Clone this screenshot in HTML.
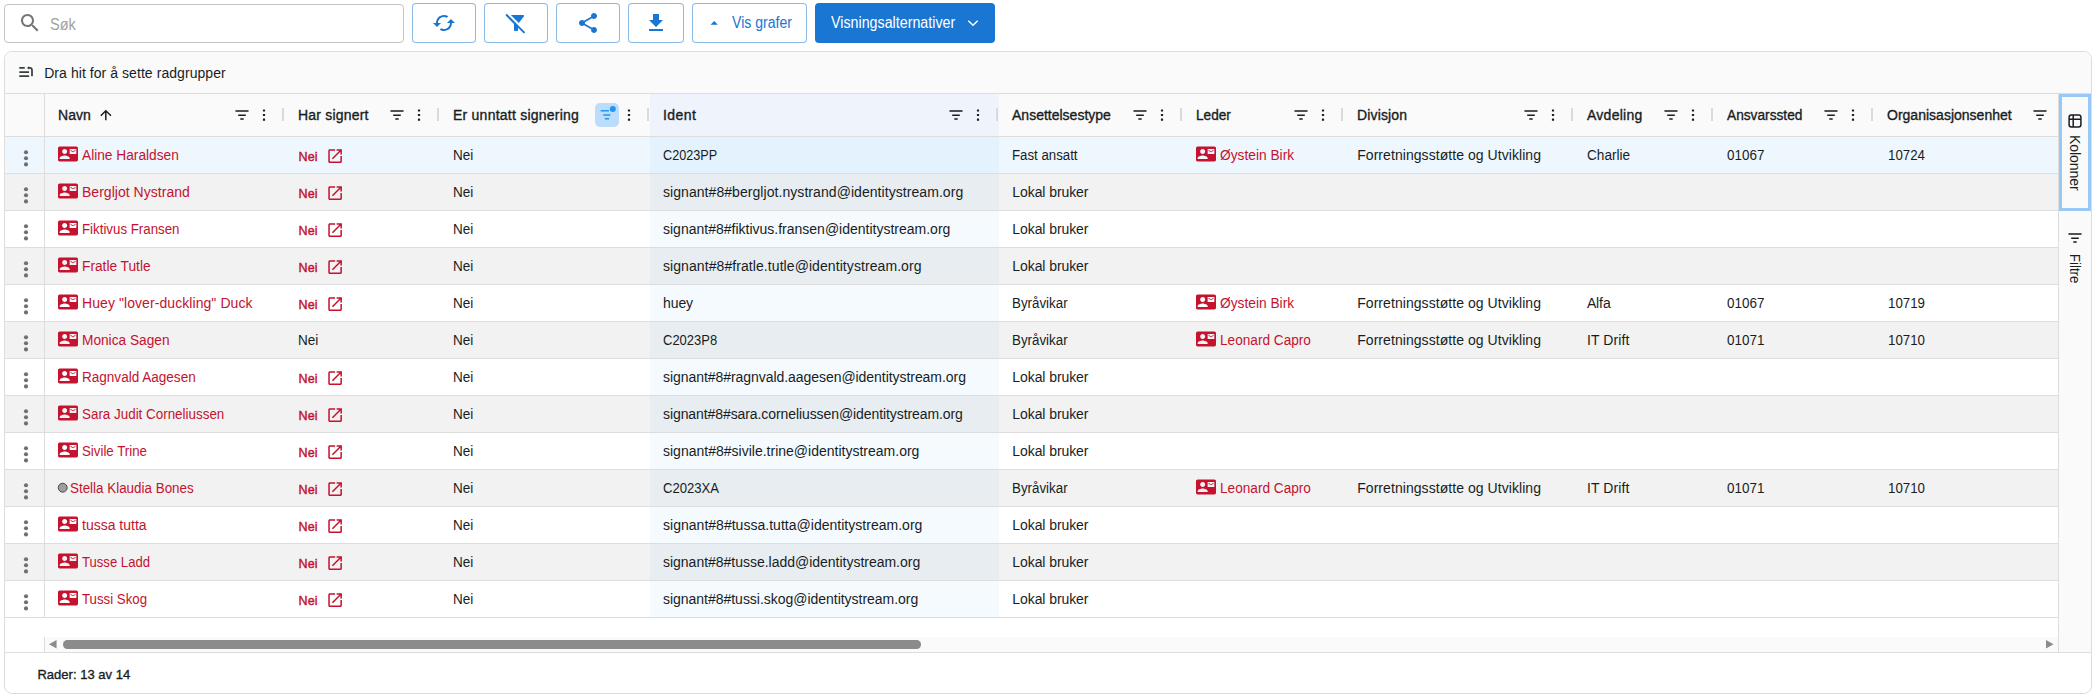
<!DOCTYPE html>
<html lang="nb"><head><meta charset="utf-8"><title>Signering</title><style>
html,body{margin:0;padding:0}
body{width:2098px;height:697px;overflow:hidden;background:#fff;position:relative;font-family:"Liberation Sans",sans-serif;color:#181d1f}
.a{position:absolute;box-sizing:border-box}
.ic{position:absolute;display:block;overflow:visible}
.t{position:absolute;white-space:nowrap;display:block;transform-origin:0 50%}
.vt{writing-mode:vertical-lr;transform:translateX(-50%);line-height:16px}
.search{left:4px;top:4px;width:400px;height:39px;border:1px solid #c4c4c4;border-radius:4px;background:#fff}
.obtn{top:3px;height:40px;border:1px solid rgba(25,118,210,.5);border-radius:4px;background:#fff}
.cbtn{top:3px;height:40px;border-radius:4px;background:#1976d2}
.grid{position:absolute;left:4px;top:51px;width:2088px;height:643px;box-sizing:border-box;border:1px solid #dddddd;border-radius:8px;overflow:hidden;background:#fff}
.gi{position:absolute;left:-5px;top:-52px;width:2098px;height:697px}
</style></head><body>
<div class="a search"></div>
<svg class="ic" style="left:17.8px;top:11px;width:24px;height:24px" viewBox="0 0 24 24"><path fill="#757575" d="M15.500 14h-.790l-.280-.270C15.410 12.590 16 11.110 16 9.500 16 5.910 13.090 3 9.500 3S3 5.910 3 9.500 5.910 16 9.500 16c1.610 0 3.090-.590 4.230-1.570l.270.280v.790l5 4.990L20.490 19l-4.990-5zm-6 0C7.010 14 5 11.990 5 9.500S7.010 5 9.500 5 14 7.010 14 9.500 11.990 14 9.500 14z"/></svg>
<span class="t " style="left:49.9px;top:4.5px;height:39px;line-height:39px;font-size:16px;color:#a2a2a2;transform:scaleX(0.9103);">Søk</span>
<div class="a obtn" style="left:412px;width:64px"></div>
<div class="a obtn" style="left:484px;width:64px"></div>
<div class="a obtn" style="left:556px;width:64px"></div>
<div class="a obtn" style="left:628px;width:56px"></div>
<div class="a obtn" style="left:692px;width:115px"></div>
<svg class="ic" style="left:432px;top:11px;width:24px;height:24px" viewBox="0 0 24 24"><path fill="#1976d2" d="M19 8l-4 4h3c0 3.310-2.690 6-6 6-1.010 0-1.970-.250-2.800-.700l-1.460 1.460C8.970 19.540 10.430 20 12 20c4.420 0 8-3.580 8-8h3l-4-4zM6 12c0-3.310 2.690-6 6-6 1.010 0 1.970.250 2.800.700l1.460-1.460C15.030 4.460 13.570 4 12 4c-4.420 0-8 3.580-8 8H1l4 4 4-4H6z"/></svg>
<svg class="ic" style="left:504px;top:11px;width:24px;height:24px" viewBox="0 0 24 24"><path fill="#1976d2" d="M19.790 5.610C20.300 4.950 19.830 4 19 4H6.830l7.970 7.970 4.990-6.360zM2.810 2.810 1.390 4.220 10 13v6c0 .550.450 1 1 1h2c.550 0 1-.450 1-1v-2.170l5.780 5.780 1.410-1.410L2.810 2.810z"/></svg>
<svg class="ic" style="left:576px;top:11px;width:24px;height:24px" viewBox="0 0 24 24"><path fill="#1976d2" d="M18 16.080c-.760 0-1.440.300-1.960.770L8.910 12.700c.050-.230.090-.460.090-.700s-.040-.470-.090-.700l7.050-4.110c.540.500 1.250.810 2.040.810 1.660 0 3-1.340 3-3s-1.340-3-3-3-3 1.340-3 3c0 .240.040.470.090.700L8.040 9.810C7.500 9.310 6.790 9 6 9c-1.660 0-3 1.340-3 3s1.340 3 3 3c.790 0 1.500-.310 2.040-.810l7.120 4.160c-.050.210-.080.430-.080.650 0 1.610 1.310 2.920 2.920 2.920 1.610 0 2.920-1.310 2.920-2.920s-1.310-2.920-2.920-2.920z"/></svg>
<svg class="ic" style="left:644px;top:11px;width:24px;height:24px" viewBox="0 0 24 24"><path fill="#1976d2" d="M19 9h-4V3H9v6H5l7 7 7-7zM5 18v2h14v-2H5z"/></svg>
<svg class="ic" style="left:709.9px;top:21.2px;width:8.4px;height:3.7px" viewBox="0 0 10 5"><path fill="#1976d2" d="M0 5l5-5 5 5z"/></svg>
<span class="t " style="left:732.0px;top:3px;height:40px;line-height:40px;font-size:15.6px;color:#1976d2;transform:scaleX(0.9029);">Vis grafer</span>
<div class="a cbtn" style="left:815px;width:180px"></div>
<span class="t " style="left:831.2px;top:3px;height:40px;line-height:40px;font-size:15.6px;color:#fff;transform:scaleX(0.9145);">Visningsalternativer</span>
<svg class="ic" style="left:966.8px;top:19.4px;width:12px;height:8px" viewBox="0 0 12 8"><path fill="none" stroke="#fff" stroke-width="1.500" d="M1.300 1.700l4.700 4.500 4.700-4.500"/></svg>
<div class="grid"><div class="gi">
<div class="a " style="left:5px;top:52px;width:2086px;height:41px;background:#fafafa"></div>
<div class="a " style="left:5px;top:93px;width:2086px;height:1px;background:#dddddd"></div>
<svg class="ic" style="left:18px;top:64px;width:16px;height:16px" viewBox="0 0 16 16"><g fill="none" stroke="#3a3f41" stroke-width="1.75"><path d="M1.300 3.900h5.500M1.300 8h9.800M1.300 12h9.800"/><path d="M14 12.300V6.200q0-2.300-2.300-2.300h-1.500"/></g><path fill="#3a3f41" d="M11.100 2.300v3.200L8.900 3.900z"/></svg>
<span class="t " style="left:44.2px;top:53.4px;height:41px;line-height:41px;font-size:14px;color:#181d1f;letter-spacing:0.060px;">Dra hit for å sette radgrupper</span>
<div class="a " style="left:5px;top:94px;width:2054px;height:42px;background:#fafafa"></div>
<div class="a " style="left:5px;top:136px;width:2054px;height:1px;background:#dddddd"></div>
<div class="a " style="left:5px;top:137px;width:2054px;height:36px;background:#fff"></div>
<div class="a " style="left:5px;top:137px;width:2054px;height:36px;background:rgba(33,150,243,.08)"></div>
<div class="a " style="left:5px;top:173px;width:2054px;height:1px;background:#dddddd"></div>
<div class="a " style="left:5px;top:174px;width:2054px;height:36px;background:#f2f2f2"></div>
<div class="a " style="left:5px;top:210px;width:2054px;height:1px;background:#dddddd"></div>
<div class="a " style="left:5px;top:211px;width:2054px;height:36px;background:#fff"></div>
<div class="a " style="left:5px;top:247px;width:2054px;height:1px;background:#dddddd"></div>
<div class="a " style="left:5px;top:248px;width:2054px;height:36px;background:#f2f2f2"></div>
<div class="a " style="left:5px;top:284px;width:2054px;height:1px;background:#dddddd"></div>
<div class="a " style="left:5px;top:285px;width:2054px;height:36px;background:#fff"></div>
<div class="a " style="left:5px;top:321px;width:2054px;height:1px;background:#dddddd"></div>
<div class="a " style="left:5px;top:322px;width:2054px;height:36px;background:#f2f2f2"></div>
<div class="a " style="left:5px;top:358px;width:2054px;height:1px;background:#dddddd"></div>
<div class="a " style="left:5px;top:359px;width:2054px;height:36px;background:#fff"></div>
<div class="a " style="left:5px;top:395px;width:2054px;height:1px;background:#dddddd"></div>
<div class="a " style="left:5px;top:396px;width:2054px;height:36px;background:#f2f2f2"></div>
<div class="a " style="left:5px;top:432px;width:2054px;height:1px;background:#dddddd"></div>
<div class="a " style="left:5px;top:433px;width:2054px;height:36px;background:#fff"></div>
<div class="a " style="left:5px;top:469px;width:2054px;height:1px;background:#dddddd"></div>
<div class="a " style="left:5px;top:470px;width:2054px;height:36px;background:#f2f2f2"></div>
<div class="a " style="left:5px;top:506px;width:2054px;height:1px;background:#dddddd"></div>
<div class="a " style="left:5px;top:507px;width:2054px;height:36px;background:#fff"></div>
<div class="a " style="left:5px;top:543px;width:2054px;height:1px;background:#dddddd"></div>
<div class="a " style="left:5px;top:544px;width:2054px;height:36px;background:#f2f2f2"></div>
<div class="a " style="left:5px;top:580px;width:2054px;height:1px;background:#dddddd"></div>
<div class="a " style="left:5px;top:581px;width:2054px;height:36px;background:#fff"></div>
<div class="a " style="left:5px;top:617px;width:2054px;height:1px;background:#dddddd"></div>
<div class="a " style="left:650px;top:94px;width:349px;height:42px;background:#eff3fb"></div>
<div class="a " style="left:650px;top:137px;width:349px;height:36px;background:rgba(33,150,243,.05)"></div>
<div class="a " style="left:650px;top:174px;width:349px;height:36px;background:rgba(33,150,243,.05)"></div>
<div class="a " style="left:650px;top:211px;width:349px;height:36px;background:rgba(33,150,243,.05)"></div>
<div class="a " style="left:650px;top:248px;width:349px;height:36px;background:rgba(33,150,243,.05)"></div>
<div class="a " style="left:650px;top:285px;width:349px;height:36px;background:rgba(33,150,243,.05)"></div>
<div class="a " style="left:650px;top:322px;width:349px;height:36px;background:rgba(33,150,243,.05)"></div>
<div class="a " style="left:650px;top:359px;width:349px;height:36px;background:rgba(33,150,243,.05)"></div>
<div class="a " style="left:650px;top:396px;width:349px;height:36px;background:rgba(33,150,243,.05)"></div>
<div class="a " style="left:650px;top:433px;width:349px;height:36px;background:rgba(33,150,243,.05)"></div>
<div class="a " style="left:650px;top:470px;width:349px;height:36px;background:rgba(33,150,243,.05)"></div>
<div class="a " style="left:650px;top:507px;width:349px;height:36px;background:rgba(33,150,243,.05)"></div>
<div class="a " style="left:650px;top:544px;width:349px;height:36px;background:rgba(33,150,243,.05)"></div>
<div class="a " style="left:650px;top:581px;width:349px;height:36px;background:rgba(33,150,243,.05)"></div>
<div class="a " style="left:44px;top:94px;width:1px;height:524px;background:#dddddd"></div>
<div class="a " style="left:44px;top:637px;width:1px;height:15px;background:#dddddd"></div>
<span class="t " style="left:58px;top:93.9px;height:43px;line-height:43px;font-size:14px;-webkit-text-stroke:.35px currentColor;color:#181d1f;letter-spacing:0.038px;">Navn</span>
<svg class="ic" style="left:233.85000000000002px;top:107.2px;width:16px;height:16px" viewBox="0 0 16 16"><g fill="none" stroke="#181d1f" stroke-width="1.500"><path d="M1.450 4h13.100M4.200 8.200h7.600M6.300 12.100h3.400"/></g></svg>
<svg class="ic" style="left:255.7px;top:107px;width:16px;height:16px" viewBox="0 0 16 16"><g fill="#181d1f"><rect x="6.900" y="2.400" width="2.200" height="2.200" rx=".5"/><rect x="6.900" y="6.900" width="2.200" height="2.200" rx=".5"/><rect x="6.900" y="11.600" width="2.200" height="2.200" rx=".5"/></g></svg>
<div class="a " style="left:282px;top:108px;width:2px;height:13px;background:#d9dada"></div>
<svg class="ic" style="left:97.9px;top:107px;width:16px;height:16px" viewBox="0 0 16 16"><path fill="none" stroke="#181d1f" stroke-width="1.500" d="M7.800 13.300V3.800M2.800 8.700l5-5 5.200 5"/></svg>
<span class="t " style="left:298px;top:93.9px;height:43px;line-height:43px;font-size:14px;-webkit-text-stroke:.35px currentColor;color:#181d1f;letter-spacing:0.193px;">Har signert</span>
<svg class="ic" style="left:388.85px;top:107.2px;width:16px;height:16px" viewBox="0 0 16 16"><g fill="none" stroke="#181d1f" stroke-width="1.500"><path d="M1.450 4h13.100M4.200 8.200h7.600M6.300 12.100h3.400"/></g></svg>
<svg class="ic" style="left:410.7px;top:107px;width:16px;height:16px" viewBox="0 0 16 16"><g fill="#181d1f"><rect x="6.900" y="2.400" width="2.200" height="2.200" rx=".5"/><rect x="6.900" y="6.900" width="2.200" height="2.200" rx=".5"/><rect x="6.900" y="11.600" width="2.200" height="2.200" rx=".5"/></g></svg>
<div class="a " style="left:437px;top:108px;width:2px;height:13px;background:#d9dada"></div>
<span class="t " style="left:453px;top:93.9px;height:43px;line-height:43px;font-size:14px;-webkit-text-stroke:.35px currentColor;color:#181d1f;letter-spacing:0.237px;">Er unntatt signering</span>
<div class="a " style="left:595.1px;top:103px;width:24px;height:24px;background:#bbdcfb;border-radius:5px"></div>
<svg class="ic" style="left:599.1px;top:107px;width:16px;height:16px" viewBox="0 0 16 16"><g fill="none" stroke="#2196f3" stroke-width="1.500"><path d="M1.700 3.800h8.200M4.300 8h7.100M5.900 11.800h4.100"/></g><circle cx="13.800" cy="1.900" r="3" fill="#2196f3"/></svg>
<svg class="ic" style="left:620.7px;top:107px;width:16px;height:16px" viewBox="0 0 16 16"><g fill="#181d1f"><rect x="6.900" y="2.400" width="2.200" height="2.200" rx=".5"/><rect x="6.900" y="6.900" width="2.200" height="2.200" rx=".5"/><rect x="6.900" y="11.600" width="2.200" height="2.200" rx=".5"/></g></svg>
<div class="a " style="left:647px;top:108px;width:2px;height:13px;background:#d9dada"></div>
<span class="t " style="left:663px;top:93.9px;height:43px;line-height:43px;font-size:14px;-webkit-text-stroke:.35px currentColor;color:#181d1f;letter-spacing:0.415px;">Ident</span>
<svg class="ic" style="left:947.8499999999999px;top:107.2px;width:16px;height:16px" viewBox="0 0 16 16"><g fill="none" stroke="#181d1f" stroke-width="1.500"><path d="M1.450 4h13.100M4.200 8.200h7.600M6.300 12.100h3.400"/></g></svg>
<svg class="ic" style="left:969.7px;top:107px;width:16px;height:16px" viewBox="0 0 16 16"><g fill="#181d1f"><rect x="6.900" y="2.400" width="2.200" height="2.200" rx=".5"/><rect x="6.900" y="6.900" width="2.200" height="2.200" rx=".5"/><rect x="6.900" y="11.600" width="2.200" height="2.200" rx=".5"/></g></svg>
<div class="a " style="left:996px;top:108px;width:2px;height:13px;background:#d9dada"></div>
<span class="t " style="left:1012px;top:93.9px;height:43px;line-height:43px;font-size:14px;-webkit-text-stroke:.35px currentColor;color:#181d1f;letter-spacing:0.004px;">Ansettelsestype</span>
<svg class="ic" style="left:1131.85px;top:107.2px;width:16px;height:16px" viewBox="0 0 16 16"><g fill="none" stroke="#181d1f" stroke-width="1.500"><path d="M1.450 4h13.100M4.200 8.200h7.600M6.300 12.100h3.400"/></g></svg>
<svg class="ic" style="left:1153.7px;top:107px;width:16px;height:16px" viewBox="0 0 16 16"><g fill="#181d1f"><rect x="6.900" y="2.400" width="2.200" height="2.200" rx=".5"/><rect x="6.900" y="6.900" width="2.200" height="2.200" rx=".5"/><rect x="6.900" y="11.600" width="2.200" height="2.200" rx=".5"/></g></svg>
<div class="a " style="left:1180px;top:108px;width:2px;height:13px;background:#d9dada"></div>
<span class="t " style="left:1196px;top:93.9px;height:43px;line-height:43px;font-size:14px;-webkit-text-stroke:.35px currentColor;color:#181d1f;transform:scaleX(0.9717);">Leder</span>
<svg class="ic" style="left:1292.85px;top:107.2px;width:16px;height:16px" viewBox="0 0 16 16"><g fill="none" stroke="#181d1f" stroke-width="1.500"><path d="M1.450 4h13.100M4.200 8.200h7.600M6.300 12.100h3.400"/></g></svg>
<svg class="ic" style="left:1314.7px;top:107px;width:16px;height:16px" viewBox="0 0 16 16"><g fill="#181d1f"><rect x="6.900" y="2.400" width="2.200" height="2.200" rx=".5"/><rect x="6.900" y="6.900" width="2.200" height="2.200" rx=".5"/><rect x="6.900" y="11.600" width="2.200" height="2.200" rx=".5"/></g></svg>
<div class="a " style="left:1341px;top:108px;width:2px;height:13px;background:#d9dada"></div>
<span class="t " style="left:1357px;top:93.9px;height:43px;line-height:43px;font-size:14px;-webkit-text-stroke:.35px currentColor;color:#181d1f;letter-spacing:0.141px;">Divisjon</span>
<svg class="ic" style="left:1522.85px;top:107.2px;width:16px;height:16px" viewBox="0 0 16 16"><g fill="none" stroke="#181d1f" stroke-width="1.500"><path d="M1.450 4h13.100M4.200 8.200h7.600M6.300 12.100h3.400"/></g></svg>
<svg class="ic" style="left:1544.7px;top:107px;width:16px;height:16px" viewBox="0 0 16 16"><g fill="#181d1f"><rect x="6.900" y="2.400" width="2.200" height="2.200" rx=".5"/><rect x="6.900" y="6.900" width="2.200" height="2.200" rx=".5"/><rect x="6.900" y="11.600" width="2.200" height="2.200" rx=".5"/></g></svg>
<div class="a " style="left:1571px;top:108px;width:2px;height:13px;background:#d9dada"></div>
<span class="t " style="left:1587px;top:93.9px;height:43px;line-height:43px;font-size:14px;-webkit-text-stroke:.35px currentColor;color:#181d1f;letter-spacing:0.264px;">Avdeling</span>
<svg class="ic" style="left:1662.85px;top:107.2px;width:16px;height:16px" viewBox="0 0 16 16"><g fill="none" stroke="#181d1f" stroke-width="1.500"><path d="M1.450 4h13.100M4.200 8.200h7.600M6.300 12.100h3.400"/></g></svg>
<svg class="ic" style="left:1684.7px;top:107px;width:16px;height:16px" viewBox="0 0 16 16"><g fill="#181d1f"><rect x="6.900" y="2.400" width="2.200" height="2.200" rx=".5"/><rect x="6.900" y="6.900" width="2.200" height="2.200" rx=".5"/><rect x="6.900" y="11.600" width="2.200" height="2.200" rx=".5"/></g></svg>
<div class="a " style="left:1711px;top:108px;width:2px;height:13px;background:#d9dada"></div>
<span class="t " style="left:1727px;top:93.9px;height:43px;line-height:43px;font-size:14px;-webkit-text-stroke:.35px currentColor;color:#181d1f;transform:scaleX(0.9786);">Ansvarssted</span>
<svg class="ic" style="left:1822.85px;top:107.2px;width:16px;height:16px" viewBox="0 0 16 16"><g fill="none" stroke="#181d1f" stroke-width="1.500"><path d="M1.450 4h13.100M4.200 8.200h7.600M6.300 12.100h3.400"/></g></svg>
<svg class="ic" style="left:1844.7px;top:107px;width:16px;height:16px" viewBox="0 0 16 16"><g fill="#181d1f"><rect x="6.900" y="2.400" width="2.200" height="2.200" rx=".5"/><rect x="6.900" y="6.900" width="2.200" height="2.200" rx=".5"/><rect x="6.900" y="11.600" width="2.200" height="2.200" rx=".5"/></g></svg>
<div class="a " style="left:1871px;top:108px;width:2px;height:13px;background:#d9dada"></div>
<span class="t " style="left:1887px;top:93.9px;height:43px;line-height:43px;font-size:14px;-webkit-text-stroke:.35px currentColor;color:#181d1f;letter-spacing:0.010px;">Organisasjonsenhet</span>
<svg class="ic" style="left:2031.85px;top:107.2px;width:16px;height:16px" viewBox="0 0 16 16"><g fill="none" stroke="#181d1f" stroke-width="1.500"><path d="M1.450 4h13.100M4.200 8.200h7.600M6.300 12.100h3.400"/></g></svg>
<svg class="ic" style="left:17.8px;top:147.7px;width:16px;height:20px" viewBox="0 0 16 20"><g fill="#6f6f6f"><circle cx="8" cy="4.300" r="2.050"/><circle cx="8" cy="10.300" r="2.050"/><circle cx="8" cy="16.400" r="2.050"/></g></svg>
<svg class="ic" style="left:57.9px;top:143.7px;width:20px;height:20px" viewBox="0 0 24 24"><path fill="#c4122f" d="M21 8V7l-3 2-3-2v1l3 2 3-2zm1-5H2C.900 3 0 3.900 0 5v14c0 1.100.900 2 2 2h20c1.100 0 1.990-.900 1.990-2L24 5c0-1.100-.900-2-2-2zM8 6c1.660 0 3 1.340 3 3s-1.340 3-3 3-3-1.340-3-3 1.340-3 3-3zm6 12H2v-1c0-2 4-3.100 6-3.100s6 1.100 6 3.100v1zm8-6h-8V6h8v6z"/></svg>
<span class="t " style="left:82px;top:137.3px;height:36px;line-height:36px;font-size:14px;color:#c4122f;transform:scaleX(0.9793);">Aline Haraldsen</span>
<span class="t " style="left:298.6px;top:138.7px;height:36px;line-height:36px;font-size:12.5px;-webkit-text-stroke:.42px currentColor;color:#c4122f;letter-spacing:0.117px;">Nei</span>
<svg class="ic" style="left:325.8px;top:146.7px;width:18.2px;height:18.2px" viewBox="0 0 24 24"><path fill="#c4122f" d="M19 19H5V5h7V3H5c-1.110 0-2 .900-2 2v14c0 1.100.890 2 2 2h14c1.100 0 2-.900 2-2v-7h-2v7zM14 3v2h3.590l-9.830 9.830 1.410 1.410L19 6.410V10h2V3h-7z"/></svg>
<span class="t " style="left:453.3px;top:137.3px;height:36px;line-height:36px;font-size:14px;color:#181d1f;transform:scaleX(0.9659);">Nei</span>
<span class="t " style="left:663px;top:137.3px;height:36px;line-height:36px;font-size:14px;color:#181d1f;transform:scaleX(0.9043);">C2023PP</span>
<span class="t " style="left:1012.3px;top:137.3px;height:36px;line-height:36px;font-size:14px;color:#181d1f;transform:scaleX(0.9456);">Fast ansatt</span>
<svg class="ic" style="left:1196.2px;top:143.7px;width:20px;height:20px" viewBox="0 0 24 24"><path fill="#c4122f" d="M21 8V7l-3 2-3-2v1l3 2 3-2zm1-5H2C.900 3 0 3.900 0 5v14c0 1.100.900 2 2 2h20c1.100 0 1.990-.900 1.990-2L24 5c0-1.100-.900-2-2-2zM8 6c1.660 0 3 1.340 3 3s-1.340 3-3 3-3-1.340-3-3 1.340-3 3-3zm6 12H2v-1c0-2 4-3.100 6-3.100s6 1.100 6 3.100v1zm8-6h-8V6h8v6z"/></svg>
<span class="t " style="left:1219.7px;top:137.3px;height:36px;line-height:36px;font-size:14px;color:#c4122f;transform:scaleX(0.9819);">Øystein Birk</span>
<span class="t " style="left:1357.2px;top:137.3px;height:36px;line-height:36px;font-size:14px;color:#181d1f;letter-spacing:0.059px;">Forretningsstøtte og Utvikling</span>
<span class="t " style="left:1586.9px;top:137.3px;height:36px;line-height:36px;font-size:14px;color:#181d1f;transform:scaleX(0.9716);">Charlie</span>
<span class="t " style="left:1727px;top:137.3px;height:36px;line-height:36px;font-size:14px;color:#181d1f;transform:scaleX(0.9605);">01067</span>
<span class="t " style="left:1887.5px;top:137.3px;height:36px;line-height:36px;font-size:14px;color:#181d1f;transform:scaleX(0.9502);">10724</span>
<svg class="ic" style="left:17.8px;top:184.7px;width:16px;height:20px" viewBox="0 0 16 20"><g fill="#6f6f6f"><circle cx="8" cy="4.300" r="2.050"/><circle cx="8" cy="10.300" r="2.050"/><circle cx="8" cy="16.400" r="2.050"/></g></svg>
<svg class="ic" style="left:57.9px;top:180.7px;width:20px;height:20px" viewBox="0 0 24 24"><path fill="#c4122f" d="M21 8V7l-3 2-3-2v1l3 2 3-2zm1-5H2C.900 3 0 3.900 0 5v14c0 1.100.900 2 2 2h20c1.100 0 1.990-.900 1.990-2L24 5c0-1.100-.900-2-2-2zM8 6c1.660 0 3 1.340 3 3s-1.340 3-3 3-3-1.340-3-3 1.340-3 3-3zm6 12H2v-1c0-2 4-3.100 6-3.100s6 1.100 6 3.100v1zm8-6h-8V6h8v6z"/></svg>
<span class="t " style="left:82px;top:174.3px;height:36px;line-height:36px;font-size:14px;color:#c4122f;letter-spacing:0.026px;">Bergljot Nystrand</span>
<span class="t " style="left:298.6px;top:175.7px;height:36px;line-height:36px;font-size:12.5px;-webkit-text-stroke:.42px currentColor;color:#c4122f;letter-spacing:0.117px;">Nei</span>
<svg class="ic" style="left:325.8px;top:183.7px;width:18.2px;height:18.2px" viewBox="0 0 24 24"><path fill="#c4122f" d="M19 19H5V5h7V3H5c-1.110 0-2 .900-2 2v14c0 1.100.890 2 2 2h14c1.100 0 2-.900 2-2v-7h-2v7zM14 3v2h3.590l-9.830 9.830 1.410 1.410L19 6.410V10h2V3h-7z"/></svg>
<span class="t " style="left:453.3px;top:174.3px;height:36px;line-height:36px;font-size:14px;color:#181d1f;transform:scaleX(0.9659);">Nei</span>
<span class="t " style="left:663px;top:174.3px;height:36px;line-height:36px;font-size:14px;color:#181d1f;letter-spacing:0.060px;">signant#8#bergljot.nystrand@identitystream.org</span>
<span class="t " style="left:1012.3px;top:174.3px;height:36px;line-height:36px;font-size:14px;color:#181d1f;letter-spacing:-0.077px;">Lokal bruker</span>
<svg class="ic" style="left:17.8px;top:221.7px;width:16px;height:20px" viewBox="0 0 16 20"><g fill="#6f6f6f"><circle cx="8" cy="4.300" r="2.050"/><circle cx="8" cy="10.300" r="2.050"/><circle cx="8" cy="16.400" r="2.050"/></g></svg>
<svg class="ic" style="left:57.9px;top:217.7px;width:20px;height:20px" viewBox="0 0 24 24"><path fill="#c4122f" d="M21 8V7l-3 2-3-2v1l3 2 3-2zm1-5H2C.900 3 0 3.900 0 5v14c0 1.100.900 2 2 2h20c1.100 0 1.990-.900 1.990-2L24 5c0-1.100-.900-2-2-2zM8 6c1.660 0 3 1.340 3 3s-1.340 3-3 3-3-1.340-3-3 1.340-3 3-3zm6 12H2v-1c0-2 4-3.100 6-3.100s6 1.100 6 3.100v1zm8-6h-8V6h8v6z"/></svg>
<span class="t " style="left:82px;top:211.3px;height:36px;line-height:36px;font-size:14px;color:#c4122f;transform:scaleX(0.9493);">Fiktivus Fransen</span>
<span class="t " style="left:298.6px;top:212.7px;height:36px;line-height:36px;font-size:12.5px;-webkit-text-stroke:.42px currentColor;color:#c4122f;letter-spacing:0.117px;">Nei</span>
<svg class="ic" style="left:325.8px;top:220.7px;width:18.2px;height:18.2px" viewBox="0 0 24 24"><path fill="#c4122f" d="M19 19H5V5h7V3H5c-1.110 0-2 .900-2 2v14c0 1.100.890 2 2 2h14c1.100 0 2-.900 2-2v-7h-2v7zM14 3v2h3.590l-9.830 9.830 1.410 1.410L19 6.410V10h2V3h-7z"/></svg>
<span class="t " style="left:453.3px;top:211.3px;height:36px;line-height:36px;font-size:14px;color:#181d1f;transform:scaleX(0.9659);">Nei</span>
<span class="t " style="left:663px;top:211.3px;height:36px;line-height:36px;font-size:14px;color:#181d1f;">signant#8#fiktivus.fransen@identitystream.org</span>
<span class="t " style="left:1012.3px;top:211.3px;height:36px;line-height:36px;font-size:14px;color:#181d1f;letter-spacing:-0.077px;">Lokal bruker</span>
<svg class="ic" style="left:17.8px;top:258.7px;width:16px;height:20px" viewBox="0 0 16 20"><g fill="#6f6f6f"><circle cx="8" cy="4.300" r="2.050"/><circle cx="8" cy="10.300" r="2.050"/><circle cx="8" cy="16.400" r="2.050"/></g></svg>
<svg class="ic" style="left:57.9px;top:254.7px;width:20px;height:20px" viewBox="0 0 24 24"><path fill="#c4122f" d="M21 8V7l-3 2-3-2v1l3 2 3-2zm1-5H2C.900 3 0 3.900 0 5v14c0 1.100.900 2 2 2h20c1.100 0 1.990-.900 1.990-2L24 5c0-1.100-.900-2-2-2zM8 6c1.660 0 3 1.340 3 3s-1.340 3-3 3-3-1.340-3-3 1.340-3 3-3zm6 12H2v-1c0-2 4-3.100 6-3.100s6 1.100 6 3.100v1zm8-6h-8V6h8v6z"/></svg>
<span class="t " style="left:82px;top:248.3px;height:36px;line-height:36px;font-size:14px;color:#c4122f;transform:scaleX(0.9796);">Fratle Tutle</span>
<span class="t " style="left:298.6px;top:249.7px;height:36px;line-height:36px;font-size:12.5px;-webkit-text-stroke:.42px currentColor;color:#c4122f;letter-spacing:0.117px;">Nei</span>
<svg class="ic" style="left:325.8px;top:257.7px;width:18.2px;height:18.2px" viewBox="0 0 24 24"><path fill="#c4122f" d="M19 19H5V5h7V3H5c-1.110 0-2 .900-2 2v14c0 1.100.890 2 2 2h14c1.100 0 2-.900 2-2v-7h-2v7zM14 3v2h3.590l-9.830 9.830 1.410 1.410L19 6.410V10h2V3h-7z"/></svg>
<span class="t " style="left:453.3px;top:248.3px;height:36px;line-height:36px;font-size:14px;color:#181d1f;transform:scaleX(0.9659);">Nei</span>
<span class="t " style="left:663px;top:248.3px;height:36px;line-height:36px;font-size:14px;color:#181d1f;letter-spacing:0.076px;">signant#8#fratle.tutle@identitystream.org</span>
<span class="t " style="left:1012.3px;top:248.3px;height:36px;line-height:36px;font-size:14px;color:#181d1f;letter-spacing:-0.077px;">Lokal bruker</span>
<svg class="ic" style="left:17.8px;top:295.7px;width:16px;height:20px" viewBox="0 0 16 20"><g fill="#6f6f6f"><circle cx="8" cy="4.300" r="2.050"/><circle cx="8" cy="10.300" r="2.050"/><circle cx="8" cy="16.400" r="2.050"/></g></svg>
<svg class="ic" style="left:57.9px;top:291.7px;width:20px;height:20px" viewBox="0 0 24 24"><path fill="#c4122f" d="M21 8V7l-3 2-3-2v1l3 2 3-2zm1-5H2C.900 3 0 3.900 0 5v14c0 1.100.900 2 2 2h20c1.100 0 1.990-.900 1.990-2L24 5c0-1.100-.900-2-2-2zM8 6c1.660 0 3 1.340 3 3s-1.340 3-3 3-3-1.340-3-3 1.340-3 3-3zm6 12H2v-1c0-2 4-3.100 6-3.100s6 1.100 6 3.100v1zm8-6h-8V6h8v6z"/></svg>
<span class="t " style="left:82px;top:285.3px;height:36px;line-height:36px;font-size:14px;color:#c4122f;letter-spacing:0.073px;">Huey "lover-duckling" Duck</span>
<span class="t " style="left:298.6px;top:286.7px;height:36px;line-height:36px;font-size:12.5px;-webkit-text-stroke:.42px currentColor;color:#c4122f;letter-spacing:0.117px;">Nei</span>
<svg class="ic" style="left:325.8px;top:294.7px;width:18.2px;height:18.2px" viewBox="0 0 24 24"><path fill="#c4122f" d="M19 19H5V5h7V3H5c-1.110 0-2 .900-2 2v14c0 1.100.890 2 2 2h14c1.100 0 2-.900 2-2v-7h-2v7zM14 3v2h3.590l-9.830 9.830 1.410 1.410L19 6.410V10h2V3h-7z"/></svg>
<span class="t " style="left:453.3px;top:285.3px;height:36px;line-height:36px;font-size:14px;color:#181d1f;transform:scaleX(0.9659);">Nei</span>
<span class="t " style="left:663px;top:285.3px;height:36px;line-height:36px;font-size:14px;color:#181d1f;letter-spacing:-0.086px;">huey</span>
<span class="t " style="left:1012.3px;top:285.3px;height:36px;line-height:36px;font-size:14px;color:#181d1f;transform:scaleX(0.9527);">Byråvikar</span>
<svg class="ic" style="left:1196.2px;top:291.7px;width:20px;height:20px" viewBox="0 0 24 24"><path fill="#c4122f" d="M21 8V7l-3 2-3-2v1l3 2 3-2zm1-5H2C.900 3 0 3.900 0 5v14c0 1.100.900 2 2 2h20c1.100 0 1.990-.900 1.990-2L24 5c0-1.100-.900-2-2-2zM8 6c1.660 0 3 1.340 3 3s-1.340 3-3 3-3-1.340-3-3 1.340-3 3-3zm6 12H2v-1c0-2 4-3.100 6-3.100s6 1.100 6 3.100v1zm8-6h-8V6h8v6z"/></svg>
<span class="t " style="left:1219.7px;top:285.3px;height:36px;line-height:36px;font-size:14px;color:#c4122f;transform:scaleX(0.9819);">Øystein Birk</span>
<span class="t " style="left:1357.2px;top:285.3px;height:36px;line-height:36px;font-size:14px;color:#181d1f;letter-spacing:0.059px;">Forretningsstøtte og Utvikling</span>
<span class="t " style="left:1586.9px;top:285.3px;height:36px;line-height:36px;font-size:14px;color:#181d1f;letter-spacing:-0.108px;">Alfa</span>
<span class="t " style="left:1727px;top:285.3px;height:36px;line-height:36px;font-size:14px;color:#181d1f;transform:scaleX(0.9605);">01067</span>
<span class="t " style="left:1887.5px;top:285.3px;height:36px;line-height:36px;font-size:14px;color:#181d1f;transform:scaleX(0.9502);">10719</span>
<svg class="ic" style="left:17.8px;top:332.7px;width:16px;height:20px" viewBox="0 0 16 20"><g fill="#6f6f6f"><circle cx="8" cy="4.300" r="2.050"/><circle cx="8" cy="10.300" r="2.050"/><circle cx="8" cy="16.400" r="2.050"/></g></svg>
<svg class="ic" style="left:57.9px;top:328.7px;width:20px;height:20px" viewBox="0 0 24 24"><path fill="#c4122f" d="M21 8V7l-3 2-3-2v1l3 2 3-2zm1-5H2C.900 3 0 3.900 0 5v14c0 1.100.900 2 2 2h20c1.100 0 1.990-.900 1.990-2L24 5c0-1.100-.900-2-2-2zM8 6c1.660 0 3 1.340 3 3s-1.340 3-3 3-3-1.340-3-3 1.340-3 3-3zm6 12H2v-1c0-2 4-3.100 6-3.100s6 1.100 6 3.100v1zm8-6h-8V6h8v6z"/></svg>
<span class="t " style="left:82px;top:322.3px;height:36px;line-height:36px;font-size:14px;color:#c4122f;transform:scaleX(0.9775);">Monica Sagen</span>
<span class="t " style="left:298.0px;top:322.3px;height:36px;line-height:36px;font-size:14px;color:#181d1f;transform:scaleX(0.9659);">Nei</span>
<span class="t " style="left:453.3px;top:322.3px;height:36px;line-height:36px;font-size:14px;color:#181d1f;transform:scaleX(0.9659);">Nei</span>
<span class="t " style="left:663px;top:322.3px;height:36px;line-height:36px;font-size:14px;color:#181d1f;transform:scaleX(0.9282);">C2023P8</span>
<span class="t " style="left:1012.3px;top:322.3px;height:36px;line-height:36px;font-size:14px;color:#181d1f;transform:scaleX(0.9527);">Byråvikar</span>
<svg class="ic" style="left:1196.2px;top:328.7px;width:20px;height:20px" viewBox="0 0 24 24"><path fill="#c4122f" d="M21 8V7l-3 2-3-2v1l3 2 3-2zm1-5H2C.900 3 0 3.900 0 5v14c0 1.100.900 2 2 2h20c1.100 0 1.990-.900 1.990-2L24 5c0-1.100-.900-2-2-2zM8 6c1.660 0 3 1.340 3 3s-1.340 3-3 3-3-1.340-3-3 1.340-3 3-3zm6 12H2v-1c0-2 4-3.100 6-3.100s6 1.100 6 3.100v1zm8-6h-8V6h8v6z"/></svg>
<span class="t " style="left:1219.7px;top:322.3px;height:36px;line-height:36px;font-size:14px;color:#c4122f;transform:scaleX(0.9732);">Leonard Capro</span>
<span class="t " style="left:1357.2px;top:322.3px;height:36px;line-height:36px;font-size:14px;color:#181d1f;letter-spacing:0.059px;">Forretningsstøtte og Utvikling</span>
<span class="t " style="left:1586.9px;top:322.3px;height:36px;line-height:36px;font-size:14px;color:#181d1f;letter-spacing:0.107px;">IT Drift</span>
<span class="t " style="left:1727px;top:322.3px;height:36px;line-height:36px;font-size:14px;color:#181d1f;transform:scaleX(0.9605);">01071</span>
<span class="t " style="left:1887.5px;top:322.3px;height:36px;line-height:36px;font-size:14px;color:#181d1f;transform:scaleX(0.9502);">10710</span>
<svg class="ic" style="left:17.8px;top:369.7px;width:16px;height:20px" viewBox="0 0 16 20"><g fill="#6f6f6f"><circle cx="8" cy="4.300" r="2.050"/><circle cx="8" cy="10.300" r="2.050"/><circle cx="8" cy="16.400" r="2.050"/></g></svg>
<svg class="ic" style="left:57.9px;top:365.7px;width:20px;height:20px" viewBox="0 0 24 24"><path fill="#c4122f" d="M21 8V7l-3 2-3-2v1l3 2 3-2zm1-5H2C.900 3 0 3.900 0 5v14c0 1.100.900 2 2 2h20c1.100 0 1.990-.900 1.990-2L24 5c0-1.100-.900-2-2-2zM8 6c1.660 0 3 1.340 3 3s-1.340 3-3 3-3-1.340-3-3 1.340-3 3-3zm6 12H2v-1c0-2 4-3.100 6-3.100s6 1.100 6 3.100v1zm8-6h-8V6h8v6z"/></svg>
<span class="t " style="left:82px;top:359.3px;height:36px;line-height:36px;font-size:14px;color:#c4122f;transform:scaleX(0.9673);">Ragnvald Aagesen</span>
<span class="t " style="left:298.6px;top:360.7px;height:36px;line-height:36px;font-size:12.5px;-webkit-text-stroke:.42px currentColor;color:#c4122f;letter-spacing:0.117px;">Nei</span>
<svg class="ic" style="left:325.8px;top:368.7px;width:18.2px;height:18.2px" viewBox="0 0 24 24"><path fill="#c4122f" d="M19 19H5V5h7V3H5c-1.110 0-2 .900-2 2v14c0 1.100.890 2 2 2h14c1.100 0 2-.900 2-2v-7h-2v7zM14 3v2h3.590l-9.830 9.830 1.410 1.410L19 6.410V10h2V3h-7z"/></svg>
<span class="t " style="left:453.3px;top:359.3px;height:36px;line-height:36px;font-size:14px;color:#181d1f;transform:scaleX(0.9659);">Nei</span>
<span class="t " style="left:663px;top:359.3px;height:36px;line-height:36px;font-size:14px;color:#181d1f;letter-spacing:-0.054px;">signant#8#ragnvald.aagesen@identitystream.org</span>
<span class="t " style="left:1012.3px;top:359.3px;height:36px;line-height:36px;font-size:14px;color:#181d1f;letter-spacing:-0.077px;">Lokal bruker</span>
<svg class="ic" style="left:17.8px;top:406.7px;width:16px;height:20px" viewBox="0 0 16 20"><g fill="#6f6f6f"><circle cx="8" cy="4.300" r="2.050"/><circle cx="8" cy="10.300" r="2.050"/><circle cx="8" cy="16.400" r="2.050"/></g></svg>
<svg class="ic" style="left:57.9px;top:402.7px;width:20px;height:20px" viewBox="0 0 24 24"><path fill="#c4122f" d="M21 8V7l-3 2-3-2v1l3 2 3-2zm1-5H2C.900 3 0 3.900 0 5v14c0 1.100.900 2 2 2h20c1.100 0 1.990-.900 1.990-2L24 5c0-1.100-.900-2-2-2zM8 6c1.660 0 3 1.340 3 3s-1.340 3-3 3-3-1.340-3-3 1.340-3 3-3zm6 12H2v-1c0-2 4-3.100 6-3.100s6 1.100 6 3.100v1zm8-6h-8V6h8v6z"/></svg>
<span class="t " style="left:82px;top:396.3px;height:36px;line-height:36px;font-size:14px;color:#c4122f;transform:scaleX(0.9573);">Sara Judit Corneliussen</span>
<span class="t " style="left:298.6px;top:397.7px;height:36px;line-height:36px;font-size:12.5px;-webkit-text-stroke:.42px currentColor;color:#c4122f;letter-spacing:0.117px;">Nei</span>
<svg class="ic" style="left:325.8px;top:405.7px;width:18.2px;height:18.2px" viewBox="0 0 24 24"><path fill="#c4122f" d="M19 19H5V5h7V3H5c-1.110 0-2 .900-2 2v14c0 1.100.890 2 2 2h14c1.100 0 2-.900 2-2v-7h-2v7zM14 3v2h3.590l-9.830 9.830 1.410 1.410L19 6.410V10h2V3h-7z"/></svg>
<span class="t " style="left:453.3px;top:396.3px;height:36px;line-height:36px;font-size:14px;color:#181d1f;transform:scaleX(0.9659);">Nei</span>
<span class="t " style="left:663px;top:396.3px;height:36px;line-height:36px;font-size:14px;color:#181d1f;letter-spacing:-0.085px;">signant#8#sara.corneliussen@identitystream.org</span>
<span class="t " style="left:1012.3px;top:396.3px;height:36px;line-height:36px;font-size:14px;color:#181d1f;letter-spacing:-0.077px;">Lokal bruker</span>
<svg class="ic" style="left:17.8px;top:443.7px;width:16px;height:20px" viewBox="0 0 16 20"><g fill="#6f6f6f"><circle cx="8" cy="4.300" r="2.050"/><circle cx="8" cy="10.300" r="2.050"/><circle cx="8" cy="16.400" r="2.050"/></g></svg>
<svg class="ic" style="left:57.9px;top:439.7px;width:20px;height:20px" viewBox="0 0 24 24"><path fill="#c4122f" d="M21 8V7l-3 2-3-2v1l3 2 3-2zm1-5H2C.900 3 0 3.900 0 5v14c0 1.100.900 2 2 2h20c1.100 0 1.990-.900 1.990-2L24 5c0-1.100-.900-2-2-2zM8 6c1.660 0 3 1.340 3 3s-1.340 3-3 3-3-1.340-3-3 1.340-3 3-3zm6 12H2v-1c0-2 4-3.100 6-3.100s6 1.100 6 3.100v1zm8-6h-8V6h8v6z"/></svg>
<span class="t " style="left:82px;top:433.3px;height:36px;line-height:36px;font-size:14px;color:#c4122f;transform:scaleX(0.9493);">Sivile Trine</span>
<span class="t " style="left:298.6px;top:434.7px;height:36px;line-height:36px;font-size:12.5px;-webkit-text-stroke:.42px currentColor;color:#c4122f;letter-spacing:0.117px;">Nei</span>
<svg class="ic" style="left:325.8px;top:442.7px;width:18.2px;height:18.2px" viewBox="0 0 24 24"><path fill="#c4122f" d="M19 19H5V5h7V3H5c-1.110 0-2 .900-2 2v14c0 1.100.890 2 2 2h14c1.100 0 2-.900 2-2v-7h-2v7zM14 3v2h3.590l-9.830 9.830 1.410 1.410L19 6.410V10h2V3h-7z"/></svg>
<span class="t " style="left:453.3px;top:433.3px;height:36px;line-height:36px;font-size:14px;color:#181d1f;transform:scaleX(0.9659);">Nei</span>
<span class="t " style="left:663px;top:433.3px;height:36px;line-height:36px;font-size:14px;color:#181d1f;letter-spacing:0.004px;">signant#8#sivile.trine@identitystream.org</span>
<span class="t " style="left:1012.3px;top:433.3px;height:36px;line-height:36px;font-size:14px;color:#181d1f;letter-spacing:-0.077px;">Lokal bruker</span>
<svg class="ic" style="left:17.8px;top:480.7px;width:16px;height:20px" viewBox="0 0 16 20"><g fill="#6f6f6f"><circle cx="8" cy="4.300" r="2.050"/><circle cx="8" cy="10.300" r="2.050"/><circle cx="8" cy="16.400" r="2.050"/></g></svg>
<svg class="ic" style="left:57.3px;top:482.3px;width:11.4px;height:11.4px" viewBox="0 0 11.400 11.400"><circle cx="5.700" cy="5.700" r="4.450" fill="#9e9e9e" stroke="#454545" stroke-width="1"/></svg>
<span class="t " style="left:69.7px;top:470.3px;height:36px;line-height:36px;font-size:14px;color:#c4122f;transform:scaleX(0.9574);">Stella Klaudia Bones</span>
<span class="t " style="left:298.6px;top:471.7px;height:36px;line-height:36px;font-size:12.5px;-webkit-text-stroke:.42px currentColor;color:#c4122f;letter-spacing:0.117px;">Nei</span>
<svg class="ic" style="left:325.8px;top:479.7px;width:18.2px;height:18.2px" viewBox="0 0 24 24"><path fill="#c4122f" d="M19 19H5V5h7V3H5c-1.110 0-2 .900-2 2v14c0 1.100.890 2 2 2h14c1.100 0 2-.900 2-2v-7h-2v7zM14 3v2h3.590l-9.830 9.830 1.410 1.410L19 6.410V10h2V3h-7z"/></svg>
<span class="t " style="left:453.3px;top:470.3px;height:36px;line-height:36px;font-size:14px;color:#181d1f;transform:scaleX(0.9659);">Nei</span>
<span class="t " style="left:663px;top:470.3px;height:36px;line-height:36px;font-size:14px;color:#181d1f;transform:scaleX(0.9360);">C2023XA</span>
<span class="t " style="left:1012.3px;top:470.3px;height:36px;line-height:36px;font-size:14px;color:#181d1f;transform:scaleX(0.9527);">Byråvikar</span>
<svg class="ic" style="left:1196.2px;top:476.7px;width:20px;height:20px" viewBox="0 0 24 24"><path fill="#c4122f" d="M21 8V7l-3 2-3-2v1l3 2 3-2zm1-5H2C.900 3 0 3.900 0 5v14c0 1.100.900 2 2 2h20c1.100 0 1.990-.900 1.990-2L24 5c0-1.100-.900-2-2-2zM8 6c1.660 0 3 1.340 3 3s-1.340 3-3 3-3-1.340-3-3 1.340-3 3-3zm6 12H2v-1c0-2 4-3.100 6-3.100s6 1.100 6 3.100v1zm8-6h-8V6h8v6z"/></svg>
<span class="t " style="left:1219.7px;top:470.3px;height:36px;line-height:36px;font-size:14px;color:#c4122f;transform:scaleX(0.9732);">Leonard Capro</span>
<span class="t " style="left:1357.2px;top:470.3px;height:36px;line-height:36px;font-size:14px;color:#181d1f;letter-spacing:0.059px;">Forretningsstøtte og Utvikling</span>
<span class="t " style="left:1586.9px;top:470.3px;height:36px;line-height:36px;font-size:14px;color:#181d1f;letter-spacing:0.107px;">IT Drift</span>
<span class="t " style="left:1727px;top:470.3px;height:36px;line-height:36px;font-size:14px;color:#181d1f;transform:scaleX(0.9605);">01071</span>
<span class="t " style="left:1887.5px;top:470.3px;height:36px;line-height:36px;font-size:14px;color:#181d1f;transform:scaleX(0.9502);">10710</span>
<svg class="ic" style="left:17.8px;top:517.7px;width:16px;height:20px" viewBox="0 0 16 20"><g fill="#6f6f6f"><circle cx="8" cy="4.300" r="2.050"/><circle cx="8" cy="10.300" r="2.050"/><circle cx="8" cy="16.400" r="2.050"/></g></svg>
<svg class="ic" style="left:57.9px;top:513.7px;width:20px;height:20px" viewBox="0 0 24 24"><path fill="#c4122f" d="M21 8V7l-3 2-3-2v1l3 2 3-2zm1-5H2C.900 3 0 3.900 0 5v14c0 1.100.900 2 2 2h20c1.100 0 1.990-.900 1.990-2L24 5c0-1.100-.900-2-2-2zM8 6c1.660 0 3 1.340 3 3s-1.340 3-3 3-3-1.340-3-3 1.340-3 3-3zm6 12H2v-1c0-2 4-3.100 6-3.100s6 1.100 6 3.100v1zm8-6h-8V6h8v6z"/></svg>
<span class="t " style="left:82px;top:507.3px;height:36px;line-height:36px;font-size:14px;color:#c4122f;">tussa tutta</span>
<span class="t " style="left:298.6px;top:508.7px;height:36px;line-height:36px;font-size:12.5px;-webkit-text-stroke:.42px currentColor;color:#c4122f;letter-spacing:0.117px;">Nei</span>
<svg class="ic" style="left:325.8px;top:516.7px;width:18.2px;height:18.2px" viewBox="0 0 24 24"><path fill="#c4122f" d="M19 19H5V5h7V3H5c-1.110 0-2 .900-2 2v14c0 1.100.890 2 2 2h14c1.100 0 2-.900 2-2v-7h-2v7zM14 3v2h3.590l-9.830 9.830 1.410 1.410L19 6.410V10h2V3h-7z"/></svg>
<span class="t " style="left:453.3px;top:507.3px;height:36px;line-height:36px;font-size:14px;color:#181d1f;transform:scaleX(0.9659);">Nei</span>
<span class="t " style="left:663px;top:507.3px;height:36px;line-height:36px;font-size:14px;color:#181d1f;letter-spacing:0.021px;">signant#8#tussa.tutta@identitystream.org</span>
<span class="t " style="left:1012.3px;top:507.3px;height:36px;line-height:36px;font-size:14px;color:#181d1f;letter-spacing:-0.077px;">Lokal bruker</span>
<svg class="ic" style="left:17.8px;top:554.7px;width:16px;height:20px" viewBox="0 0 16 20"><g fill="#6f6f6f"><circle cx="8" cy="4.300" r="2.050"/><circle cx="8" cy="10.300" r="2.050"/><circle cx="8" cy="16.400" r="2.050"/></g></svg>
<svg class="ic" style="left:57.9px;top:550.7px;width:20px;height:20px" viewBox="0 0 24 24"><path fill="#c4122f" d="M21 8V7l-3 2-3-2v1l3 2 3-2zm1-5H2C.900 3 0 3.900 0 5v14c0 1.100.900 2 2 2h20c1.100 0 1.990-.900 1.990-2L24 5c0-1.100-.900-2-2-2zM8 6c1.660 0 3 1.340 3 3s-1.340 3-3 3-3-1.340-3-3 1.340-3 3-3zm6 12H2v-1c0-2 4-3.100 6-3.100s6 1.100 6 3.100v1zm8-6h-8V6h8v6z"/></svg>
<span class="t " style="left:82px;top:544.3px;height:36px;line-height:36px;font-size:14px;color:#c4122f;transform:scaleX(0.9361);">Tusse Ladd</span>
<span class="t " style="left:298.6px;top:545.7px;height:36px;line-height:36px;font-size:12.5px;-webkit-text-stroke:.42px currentColor;color:#c4122f;letter-spacing:0.117px;">Nei</span>
<svg class="ic" style="left:325.8px;top:553.7px;width:18.2px;height:18.2px" viewBox="0 0 24 24"><path fill="#c4122f" d="M19 19H5V5h7V3H5c-1.110 0-2 .900-2 2v14c0 1.100.890 2 2 2h14c1.100 0 2-.900 2-2v-7h-2v7zM14 3v2h3.590l-9.830 9.830 1.410 1.410L19 6.410V10h2V3h-7z"/></svg>
<span class="t " style="left:453.3px;top:544.3px;height:36px;line-height:36px;font-size:14px;color:#181d1f;transform:scaleX(0.9659);">Nei</span>
<span class="t " style="left:663px;top:544.3px;height:36px;line-height:36px;font-size:14px;color:#181d1f;letter-spacing:-0.016px;">signant#8#tusse.ladd@identitystream.org</span>
<span class="t " style="left:1012.3px;top:544.3px;height:36px;line-height:36px;font-size:14px;color:#181d1f;letter-spacing:-0.077px;">Lokal bruker</span>
<svg class="ic" style="left:17.8px;top:591.7px;width:16px;height:20px" viewBox="0 0 16 20"><g fill="#6f6f6f"><circle cx="8" cy="4.300" r="2.050"/><circle cx="8" cy="10.300" r="2.050"/><circle cx="8" cy="16.400" r="2.050"/></g></svg>
<svg class="ic" style="left:57.9px;top:587.7px;width:20px;height:20px" viewBox="0 0 24 24"><path fill="#c4122f" d="M21 8V7l-3 2-3-2v1l3 2 3-2zm1-5H2C.900 3 0 3.900 0 5v14c0 1.100.900 2 2 2h20c1.100 0 1.990-.900 1.990-2L24 5c0-1.100-.900-2-2-2zM8 6c1.660 0 3 1.340 3 3s-1.340 3-3 3-3-1.340-3-3 1.340-3 3-3zm6 12H2v-1c0-2 4-3.100 6-3.100s6 1.100 6 3.100v1zm8-6h-8V6h8v6z"/></svg>
<span class="t " style="left:82px;top:581.3px;height:36px;line-height:36px;font-size:14px;color:#c4122f;transform:scaleX(0.9457);">Tussi Skog</span>
<span class="t " style="left:298.6px;top:582.7px;height:36px;line-height:36px;font-size:12.5px;-webkit-text-stroke:.42px currentColor;color:#c4122f;letter-spacing:0.117px;">Nei</span>
<svg class="ic" style="left:325.8px;top:590.7px;width:18.2px;height:18.2px" viewBox="0 0 24 24"><path fill="#c4122f" d="M19 19H5V5h7V3H5c-1.110 0-2 .900-2 2v14c0 1.100.890 2 2 2h14c1.100 0 2-.900 2-2v-7h-2v7zM14 3v2h3.590l-9.830 9.830 1.410 1.410L19 6.410V10h2V3h-7z"/></svg>
<span class="t " style="left:453.3px;top:581.3px;height:36px;line-height:36px;font-size:14px;color:#181d1f;transform:scaleX(0.9659);">Nei</span>
<span class="t " style="left:663px;top:581.3px;height:36px;line-height:36px;font-size:14px;color:#181d1f;letter-spacing:-0.025px;">signant#8#tussi.skog@identitystream.org</span>
<span class="t " style="left:1012.3px;top:581.3px;height:36px;line-height:36px;font-size:14px;color:#181d1f;letter-spacing:-0.077px;">Lokal bruker</span>
<div class="a " style="left:45px;top:637px;width:2013px;height:15px;background:#fafafa"></div>
<svg class="ic" style="left:49.3px;top:640.4px;width:7.6px;height:8.4px" viewBox="0 0 7.600 8.400"><path fill="#8b8b8b" d="M7.600 0v8.400L0 4.200z"/></svg>
<div class="a " style="left:62.9px;top:640.3px;width:858px;height:8.6px;background:#8b8b8b;border-radius:4.300px"></div>
<svg class="ic" style="left:2046px;top:640.4px;width:7.6px;height:8.4px" viewBox="0 0 7.600 8.400"><path fill="#8b8b8b" d="M0 0v8.400l7.600-4.200z"/></svg>
<div class="a " style="left:2058px;top:94px;width:1px;height:558px;background:#dddddd"></div>
<div class="a " style="left:2059px;top:94px;width:32px;height:558px;background:#fafafa"></div>
<div class="a " style="left:2059px;top:94px;width:32px;height:116.5px;box-shadow:inset 0 0 0 3px #97c9f7"></div>
<svg class="ic" style="left:2067px;top:112.7px;width:16px;height:16px" viewBox="0 0 16 16"><g fill="none" stroke="#181d1f" stroke-width="1.500"><rect x="2.100" y="2.100" width="11.800" height="11.800" rx="2.200"/><path d="M2.100 6.300h11.800M6.200 2.100v11.800"/></g></svg>
<span class="t vt" style="left:2075px;top:135.4px;font-size:14px;color:#181d1f;letter-spacing:-0.064px;">Kolonner</span>
<svg class="ic" style="left:2066.8px;top:229.5px;width:16px;height:16px" viewBox="0 0 16 16"><g fill="none" stroke="#181d1f" stroke-width="1.500"><path d="M1.450 4h13.100M4.200 8.200h7.600M6.300 12.100h3.400"/></g></svg>
<span class="t vt" style="left:2075px;top:254.1px;font-size:14px;color:#181d1f;transform:translateX(-50%) scaleY(0.9414);transform-origin:50% 0;">Filtre</span>
<div class="a " style="left:5px;top:652px;width:2086px;height:1px;background:#dddddd"></div>
<span class="t " style="left:37.4px;top:653.7px;height:41px;line-height:41px;font-size:13px;-webkit-text-stroke:.35px currentColor;color:#181d1f;letter-spacing:0.027px;">Rader: 13 av 14</span>
</div></div>
</body></html>
